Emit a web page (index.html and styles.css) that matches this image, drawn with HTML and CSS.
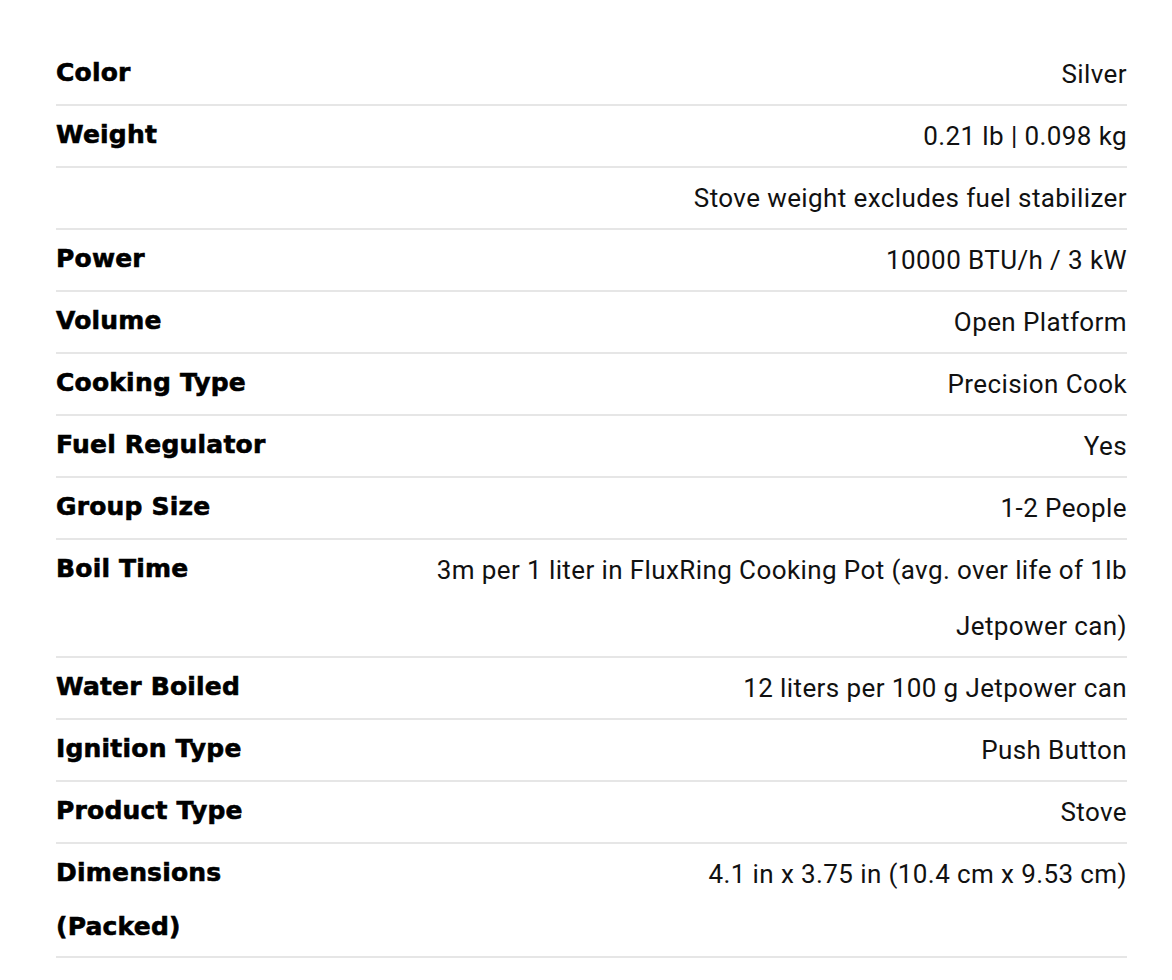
FILE: index.html
```html
<!DOCTYPE html>
<html lang="en">
<head>
<meta charset="utf-8">
<link rel="stylesheet" href="styles.css">
</head>
<body>
<div class="specs">
  <div class="row"><div class="label">Color</div><div class="value">Silver</div></div>
  <div class="row"><div class="label">Weight</div><div class="value">0.21 lb | 0.098 kg</div></div>
  <div class="row"><div class="label"></div><div class="value">Stove weight excludes fuel stabilizer</div></div>
  <div class="row"><div class="label">Power</div><div class="value">10000 BTU/h / 3 kW</div></div>
  <div class="row"><div class="label">Volume</div><div class="value">Open Platform</div></div>
  <div class="row"><div class="label">Cooking Type</div><div class="value">Precision Cook</div></div>
  <div class="row"><div class="label">Fuel Regulator</div><div class="value">Yes</div></div>
  <div class="row"><div class="label">Group Size</div><div class="value">1-2 People</div></div>
  <div class="row"><div class="label">Boil Time</div><div class="value">3m per 1 liter in FluxRing Cooking Pot (avg. over life of 1lb Jetpower can)</div></div>
  <div class="row"><div class="label">Water Boiled</div><div class="value">12 liters per 100 g Jetpower can</div></div>
  <div class="row"><div class="label">Ignition Type</div><div class="value">Push Button</div></div>
  <div class="row"><div class="label">Product Type</div><div class="value">Stove</div></div>
  <div class="row"><div class="label">Dimensions (Packed)</div><div class="value">4.1 in x 3.75 in (10.4 cm x 9.53 cm)</div></div>
</div>
</body>
</html>
```
FILE: styles.css
```css
html, body {
  margin: 0;
  padding: 0;
  background: #fff;
}
.specs {
  margin: 44px 45px 0 56px;
  width: 1071px;
}
.row {
  display: flex;
  justify-content: space-between;
  align-items: flex-start;
  padding: 2px 0;
  border-bottom: 2px solid #e6e6e6;
  line-height: 56px;
}
.label {
  flex: 0 0 230px;
  line-height: 54px;
  font-family: "DejaVu Sans", "Liberation Sans", sans-serif;
  font-weight: 700;
  font-size: 25px;
  letter-spacing: 0.2px;
  -webkit-text-stroke: 0.6px #000;
  color: #000;
}
.value {
  flex: 1 1 auto;
  max-width: 702px;
  text-align: right;
  font-family: "Roboto", "Liberation Sans", sans-serif;
  font-size: 26px;
  letter-spacing: 0.4px;
  color: #111;
}
```
